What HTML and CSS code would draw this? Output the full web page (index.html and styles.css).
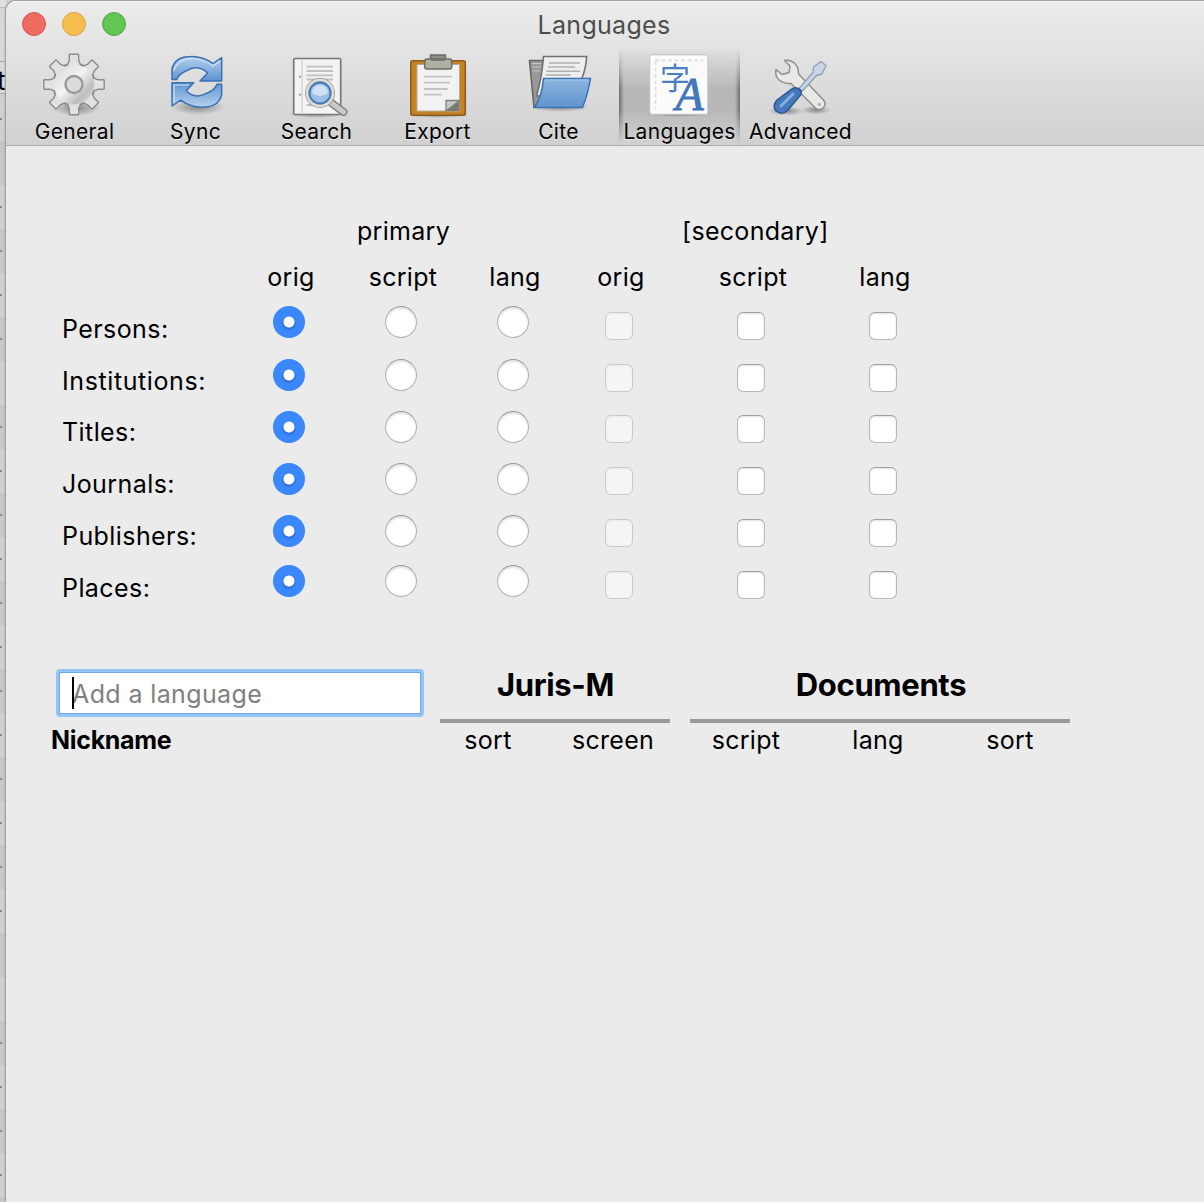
FILE: index.html
```html
<!DOCTYPE html>
<html lang="en">
<head>
<meta charset="utf-8">
<title>Languages</title>
<link rel="stylesheet" href="styles.css">
</head>
<body>
<div class="desktop">
  <div class="behind">
    <div class="behind-top"></div>
    <div class="behind-gap"></div>
    <div class="behind-field">t</div>
    <div class="behind-rows" id="rows"></div>
  </div>
  <main class="window">
    <header class="chrome">
      <div class="titlebar">
        <div class="lights"><i class="light red"></i><i class="light amber"></i><i class="light green"></i></div>
        <h1 class="title">Languages</h1>
      </div>
      <nav class="toolbar">
        <div class="tool">
          <svg class="icon" viewBox="0 0 64 64">
            <defs>
              <linearGradient id="metal" x1="0" y1="0" x2="1" y2="1"><stop offset="0" stop-color="#d4d4d4"/><stop offset=".45" stop-color="#f4f4f4"/><stop offset=".75" stop-color="#bdbdbd"/><stop offset="1" stop-color="#eee"/></linearGradient>
              <linearGradient id="blue" x1="0" y1="0" x2="0" y2="1"><stop offset="0" stop-color="#b5d0ee"/><stop offset="1" stop-color="#5e94d0"/></linearGradient>
              <radialGradient id="shade"><stop offset="0" stop-color="#000" stop-opacity=".38"/><stop offset="1" stop-color="#000" stop-opacity="0"/></radialGradient>
              <path id="tooth" d="M25.500 14 L28 7.500 V2 H36 V7.500 L38.500 14Z"/>
              <g id="teeth"><use href="#tooth"/><use href="#tooth" transform="rotate(45 32 31.500)"/><use href="#tooth" transform="rotate(90 32 31.500)"/><use href="#tooth" transform="rotate(135 32 31.500)"/><use href="#tooth" transform="rotate(180 32 31.500)"/><use href="#tooth" transform="rotate(225 32 31.500)"/><use href="#tooth" transform="rotate(270 32 31.500)"/><use href="#tooth" transform="rotate(315 32 31.500)"/></g>
            </defs>
            <ellipse cx="34" cy="55" rx="24" ry="8" fill="url(#shade)"/>
            <g fill="#ddd" stroke="#8c8c8c" stroke-width="2.800" stroke-linejoin="round"><use href="#teeth"/><circle cx="32" cy="31.500" r="20.500"/></g>
            <use href="#teeth" fill="#e2e2e2"/>
            <circle cx="32" cy="31.500" r="20" fill="url(#metal)"/>
            <circle cx="32" cy="31.500" r="8.500" fill="#dcdcdc" stroke="#999" stroke-width="2.400"/>
          </svg>
          <span class="cap">General</span>
        </div>
        <div class="tool">
          <svg class="icon" viewBox="0 0 64 64">
            <ellipse cx="35" cy="54" rx="27" ry="8" fill="url(#shade)"/>
            <g stroke="#3d70b2" stroke-width="1.500" stroke-linejoin="round" fill="url(#blue)">
              <path d="M9 26.500 V16 C11 7 19 3.500 28 3.500 C37 3.300 43 5.500 50 10.500 L58.700 4.700 V28 H37 L44.500 20 C39 14 31 13.500 25 17 C19 19.500 15 22 13.700 26.500Z"/>
              <path d="M9 26.500 V16 C11 7 19 3.500 28 3.500 C37 3.300 43 5.500 50 10.500 L58.700 4.700 V28 H37 L44.500 20 C39 14 31 13.500 25 17 C19 19.500 15 22 13.700 26.500Z" transform="rotate(180 33.850 28.850)"/>
            </g>
            <path d="M11 18 C13 9 21 5.500 29 5.500 C37 5.500 43 8 50 13 L57 8" fill="none" stroke="#d3e4f7" stroke-width="1.200"/>
            <path d="M11 49 V32 H26" fill="none" stroke="#d3e4f7" stroke-width="1.200"/>
          </svg>
          <span class="cap">Sync</span>
        </div>
        <div class="tool">
          <svg class="icon" viewBox="0 0 64 64">
            <ellipse cx="33" cy="61" rx="29" ry="4" fill="url(#shade)"/>
            <rect x="9.700" y="5.500" width="47" height="56" rx="1.500" fill="#f3f3f3" stroke="#777" stroke-width="1.700"/>
            <path d="M18 7V60" stroke="#d6d6d6" stroke-width="1.500"/>
            <path d="M22.500 13.700H49M22.500 18H49M22.500 22.300H49M22.500 26.500H49M22.500 52H34" stroke="#c0c0c0" stroke-width="1.800"/>
            <circle cx="16" cy="23.700" r="1.200" fill="#aaa"/><circle cx="16" cy="41.700" r="1.200" fill="#aaa"/>
            <path d="M47.500 50L59.500 59" stroke="#858585" stroke-width="8" stroke-linecap="round"/>
            <path d="M47.500 50L59.500 59" stroke="#c9c9c9" stroke-width="5" stroke-linecap="round"/>
            <circle cx="36" cy="40" r="13.200" fill="#b9d2ef" stroke="#999b98" stroke-width="3.600"/>
            <circle cx="36" cy="40" r="13" fill="none" stroke="#deded9" stroke-width="2.400"/>
            <circle cx="36" cy="40" r="10.500" fill="#9fc0e6" stroke="#4578ba" stroke-width="1.800"/>
            <path d="M28 40A8 8 0 0 1 44 40Q36 46 28 40Z" fill="#e2edf9" opacity=".75"/>
          </svg>
          <span class="cap">Search</span>
        </div>
        <div class="tool">
          <svg class="icon" viewBox="0 0 64 64">
            <ellipse cx="33" cy="62" rx="31" ry="3" fill="url(#shade)"/>
            <rect x="5.800" y="7.800" width="54.500" height="54.500" rx="2" fill="#c58326" stroke="#8c5c1d" stroke-width="1.600"/>
            <path d="M12 11.500H54.500V58H12Z" fill="#f2f2f2" stroke="#b5aa99"/>
            <path d="M54.500 47V58H41Z" fill="#777a76"/><path d="M41 58V47.500H54.500Z" fill="#c6c8c3" stroke="#7e817c" stroke-width="1.300"/>
            <path d="M19 23.700H46.700M19 29.700H45M19 36H42.700M19 41.700H36.700" stroke="#c3c3c3" stroke-width="1.800"/>
            <rect x="25.500" y="2" width="15" height="7" fill="#8d8f83" stroke="#64665e" stroke-width="1.400"/>
            <rect x="19.700" y="6" width="27" height="10" rx="2.500" fill="#adafa3" stroke="#6b6d65" stroke-width="1.500"/>
            <path d="M26 7H40" stroke="#777970" stroke-width="2"/>
          </svg>
          <span class="cap">Export</span>
        </div>
        <div class="tool">
          <svg class="icon" viewBox="0 0 64 64">
            <ellipse cx="34" cy="54" rx="30" ry="5" fill="url(#shade)"/>
            <path d="M3.500 7.500H17V50L8 54Z" fill="#999" stroke="#666" stroke-width="1.600"/>
            <path d="M6 10.500H15M6 14H15M7 18H14" stroke="#c4c4c4"/>
            <path d="M17.500 3.500H60.700Q60 15 55.700 26L52 43H10.500Q16 24 17.500 3.500Z" fill="#eee" stroke="#707070" stroke-width="1.600"/>
            <path d="M23 10H54M22 14H49M20.500 18.300H54M19.500 22H45" stroke="#b0b0b0" stroke-width="1.600"/>
            <path d="M17.500 25.500H64.500Q62 41 56.500 54.500H8.500Q16 43 17.500 25.500Z" fill="url(#folder)" stroke="#3b70b4" stroke-width="1.500"/>
            <path d="M19 27H62.500" stroke="#a9c8ea"/>
            <defs><linearGradient id="folder" x1="0" y1="0" x2="0" y2="1"><stop offset="0" stop-color="#8bb3df"/><stop offset="1" stop-color="#6295cd"/></linearGradient></defs>
          </svg>
          <span class="cap">Cite</span>
        </div>
        <div class="tool selected">
          <svg class="icon" viewBox="0 0 64 64">
            <ellipse cx="32" cy="60" rx="34" ry="4" fill="url(#shade)"/>
            <rect x="2.800" y="1.800" width="58" height="59.500" rx="1.500" fill="#fbfbfb" stroke="#c2c2c2"/>
            <path d="M8.500 8V56M8 7.500H56" fill="none" stroke="#e0e0e0" stroke-width="1.800" stroke-dasharray="4 2.500"/>
            <text x="13" y="36" class="glyph-zi">字</text>
            <text x="28.500" y="56.500" class="glyph-a">A</text>
          </svg>
          <span class="cap">Languages</span>
        </div>
        <div class="tool">
          <svg class="icon" viewBox="0 0 64 64">
            <ellipse cx="18" cy="58" rx="18" ry="4.500" fill="url(#shade)"/><ellipse cx="48" cy="57" rx="15" ry="4.500" fill="url(#shade)"/>
            <path d="M16.500 7.500C24 6 31 12 30.500 21L55.500 47C60 53 53 59 47.500 55L23 30.500C14 31 6 26 8 16.500L14 21.500L21 19.500L22 13Z" fill="#e9e9e7" stroke="#8f908b" stroke-width="1.500" stroke-linejoin="round"/>
            <circle cx="51.300" cy="51.500" r="1.600" fill="#aaa"/>
            <path d="M31 35.500L45 19.500L45.500 14L53 8.500L58 12.500L54 21L48.500 22.500L34.500 38Z" fill="#c9d6e6" stroke="#8fa0b6" stroke-width="1.300" stroke-linejoin="round"/>
            <path d="M24 36Q29 33 33 38Q34 41 31 44L20 57Q14 63 8 58Q4 53 9 47Z" fill="#4579bb" stroke="#2c5891" stroke-width="1.500"/>
            <path d="M25 41L13 53" stroke="#86aedd" stroke-width="3" stroke-linecap="round"/>
          </svg>
          <span class="cap">Advanced</span>
        </div>
      </nav>
    </header>
    <section class="matrix">
      <div class="groups"><span class="primary">primary</span><span class="secondary">[secondary]</span></div>
      <div class="grid heads"><span></span><span>orig</span><span>script</span><span>lang</span><span>orig</span><span>script</span><span>lang</span></div>
      <div class="grid row r1"><span class="name">Persons:</span><i class="radio on"></i><i class="radio"></i><i class="radio"></i><i class="check off"></i><i class="check"></i><i class="check"></i></div>
      <div class="grid row r2"><span class="name wide">Institutions:</span><i class="radio on"></i><i class="radio"></i><i class="radio"></i><i class="check off"></i><i class="check"></i><i class="check"></i></div>
      <div class="grid row r3"><span class="name">Titles:</span><i class="radio on"></i><i class="radio"></i><i class="radio"></i><i class="check off"></i><i class="check"></i><i class="check"></i></div>
      <div class="grid row r4"><span class="name">Journals:</span><i class="radio on"></i><i class="radio"></i><i class="radio"></i><i class="check off"></i><i class="check"></i><i class="check"></i></div>
      <div class="grid row r5"><span class="name">Publishers:</span><i class="radio on"></i><i class="radio"></i><i class="radio"></i><i class="check off"></i><i class="check"></i><i class="check"></i></div>
      <div class="grid row r6"><span class="name">Places:</span><i class="radio on"></i><i class="radio"></i><i class="radio"></i><i class="check off"></i><i class="check"></i><i class="check"></i></div>
    </section>
    <section class="langs">
      <div class="add">
        <div class="field"><input class="input" type="text" placeholder="Add a language"><i class="caret"></i></div>
        <strong class="nick">Nickname</strong>
      </div>
      <div class="block juris">
        <h2>Juris-M</h2>
        <div class="subs"><span>sort</span><span>screen</span></div>
      </div>
      <div class="block docs">
        <h2>Documents</h2>
        <div class="subs"><span>script</span><span>lang</span><span>sort</span></div>
      </div>
    </section>
  </main>
</div>
<script src="rows.js"></script>
</body>
</html>
```
FILE: rows.js
```js
// Striped list of the window behind; some rows carry no mark.
const unmarked = [1, 6, 19, 20];
const list = document.getElementById('rows');
for (let i = 0; i < 26; i++) {
  const row = document.createElement('div');
  row.className = 'stripe' + (unmarked.includes(i) ? '' : ' marked');
  list.appendChild(row);
}
```
FILE: styles.css
```css
* { box-sizing: border-box; }
body { margin: 0; background: #cfcfcf; font-family: Inter, "Liberation Sans", sans-serif; font-size: 25px; color: #000; }
.desktop { width: 1204px; height: 1202px; display: flex; overflow: hidden; background: #cfcfcf; }
.behind { width: 6px; flex: none; overflow: hidden; background: #d0d0d0; }
.behind-top { height: 8px; background: #e0e0e0; border-bottom: 1px solid #bbb; }
.behind-gap { height: 54px; background: #d8d8d8; border-bottom: 1px solid #aaa; }
.behind-field { height: 32px; background: #d9d9d9; border-bottom: 1px solid #aaa; font-size: 26px; line-height: 38px; margin-left: -3px; }
.behind-rows { margin-top: 3px; }
.stripe { height: 44px; background: #d0d0d0; display: flex; align-items: center; }
.stripe:nth-child(even) { background: #c5c8c7; }
.marked::before { content: ""; width: 2px; height: 2px; background: #888; }
.window { flex: 1; margin-top: 1px; background: #ebebeb; border-radius: 10px 0 0 0; overflow: hidden; box-shadow: 0 0 0 1px #a2a2a2, 0 0 3px #777; }
.chrome { height: 145px; background: linear-gradient(#ececec, #e4e4e4 30%, #d1d1d1); border-bottom: 1px solid #adadad; box-shadow: inset 0 1px #f7f7f7; }
.titlebar { height: 48px; display: grid; grid-template-columns: 234px 1fr 234px; align-items: center; }
.lights { display: flex; gap: 16px; padding-left: 16px; margin-top: -2px; }
.light { width: 24px; height: 24px; border-radius: 50%; }
.red { background: #ed6b60; border: 1px solid #d9544c; }
.amber { background: #f5bf50; border: 1px solid #dca03b; }
.green { background: #62c655; border: 1px solid #4ead3e; }
.title { margin: 0; padding-right: 2px; text-align: center; font-size: 25px; font-weight: 400; letter-spacing: .3px; color: #4d4d4d; line-height: 48px; }
.toolbar { display: flex; padding-left: 8px; height: 96px; }
.tool { width: 121px; display: flex; flex-direction: column; align-items: center; padding-top: 4px; }
.icon { width: 64px; height: 64px; flex: none; overflow: visible; margin-right: 2px; }
.cap { font-size: 21px; line-height: 28px; margin-top: 1px; white-space: nowrap; text-shadow: 0 1px rgba(255,255,255,.5); letter-spacing: .32px; }
.selected { background: linear-gradient(#e1e1e1, transparent 42%, transparent 62%, #d3d3d3), linear-gradient(90deg, #6c6c6c, #8b8b8b 2px, #b7b7b7 5px, #b7b7b7 116px, #8b8b8b 119px, #6c6c6c); }
.glyph-zi { font: 30px "Noto Sans CJK JP", sans-serif; fill: #4a7fc0; }
.glyph-a { font: italic 46px "Liberation Serif", serif; fill: #4277b8; stroke: #4277b8; stroke-width: 1px; }
.matrix { padding: 62px 0 0 56px; height: 508px; line-height: 46px; }
.groups { display: flex; letter-spacing: .3px; }
.primary { width: 682px; padding-left: 295px; flex: none; margin-right: -62px; }
.grid { display: grid; grid-template-columns: 171px 112px 112px 112px 100px 164px 100px; justify-items: center; align-items: center; }
.heads { padding-left: 2px; letter-spacing: .3px; }
.row { height: 51.8px; }
.name { justify-self: start; letter-spacing: .42px; padding-top: 5.800px; }
.wide { letter-spacing: .6px; }
.radio { width: 32px; height: 32px; border-radius: 50%; background: #fff; border: 1px solid #b2b2b2; border-top-color: #969696; box-shadow: inset 0 2px 2px rgba(0,0,0,.12); margin-bottom: 6px; }
.on { background: radial-gradient(circle at 50% 50%, #fff 5px, transparent 6px), radial-gradient(circle at 50% 54%, #2c70dc 5px, #3b88fd 8px); border: 0; box-shadow: none; }
.r1 .radio, .r6 .radio { margin-bottom: 8px; }
.r3 .radio { margin-bottom: 5px; }
.r4 .radio, .r5 .radio { margin-bottom: 4px; }
.check { width: 28px; height: 28px; border-radius: 6px; background: #fff; border: 1px solid #b8b8b8; border-top-color: #a0a0a0; box-shadow: inset 0 1px 2px rgba(0,0,0,.12); }
.off { background: #f5f5f5; border-color: #cacaca; box-shadow: inset 0 1px 2px rgba(0,0,0,.05); }
.langs { display: flex; align-items: flex-start; padding-left: 45px; }
.add { width: 389px; padding-top: 15px; }
.field { position: relative; width: 368px; height: 48px; margin-left: 5px; border: 3px solid #94c3f6; border-radius: 4px; }
.input { display: block; width: 100%; height: 100%; border: 1px solid #70a9e5; outline: 0; padding: 1px 12px 0; background: #fff; font: 25px Inter, sans-serif; letter-spacing: .38px; }
.input::placeholder { color: #808080; opacity: 1; }
.caret { position: absolute; left: 13px; top: 5px; width: 2px; height: 32px; background: #000; }
.nick { display: block; line-height: 46px; letter-spacing: -.3px; }
.block h2 { margin: 0; height: 69px; line-height: 62px; font-size: 31px; font-weight: 700; text-align: center; letter-spacing: -.35px; border-bottom: 4px solid #999; }
.juris { width: 250px; }
.juris h2 { width: 230px; padding-left: 1px; }
.docs h2 { width: 380px; padding-left: 2px; }
.subs { display: grid; justify-items: center; line-height: 34px; letter-spacing: .3px; }
.juris .subs { grid-template-columns: 96px 154px; }
.docs .subs { grid-template-columns: 112px 152px 112px; }
```
